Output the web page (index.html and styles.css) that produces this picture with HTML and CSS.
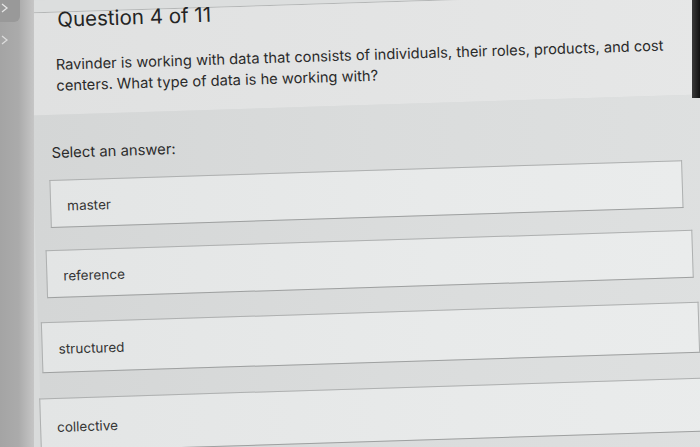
FILE: index.html
```html
<!DOCTYPE html>
<html lang="en">
<head>
<meta charset="utf-8">
<title>Question 4 of 11</title>
<link rel="stylesheet" href="styles.css">
</head>
<body>
<div class="screen">
  <aside class="rail">
    <div class="rail-tile">
      <svg width="10" height="12" viewBox="0 0 10 12"><path d="M2 2 L7 6 L2 10" fill="none" stroke="#e6e6e6" stroke-width="1.3"/></svg>
    </div>
    <div class="rail-chev">
      <svg width="10" height="12" viewBox="0 0 10 12"><path d="M2 2 L7 6 L2 10" fill="none" stroke="#dcdcdc" stroke-width="1.3"/></svg>
    </div>
  </aside>
  <main class="panel">
    <div class="topbar"></div>
    <section class="question">
      <h1 class="title">Question 4 of 11</h1>
      <p class="prompt">Ravinder is working with data that consists of individuals, their roles, products, and cost centers. What type of data is he working with?</p>
    </section>
    <section class="answers">
      <p class="select">Select an answer:</p>
      <div class="options">
        <div class="option opt1">master</div>
        <div class="option opt2">reference</div>
        <div class="option opt3">structured</div>
        <div class="option opt4">collective</div>
      </div>
    </section>
  </main>
  <div class="bezel"></div>
</div>
</body>
</html>
```

FILE: styles.css
```css
* { box-sizing: border-box; }
html, body {
  margin: 0;
  padding: 0;
  width: 700px;
  height: 447px;
  overflow: hidden;
  background: #d9dbdb;
  font-family: Inter, "Liberation Sans", Arial, sans-serif;
  color: #2e2e2e;
}
.screen {
  position: relative;
  display: flex;
  width: 700px;
  height: 447px;
  overflow: hidden;
}
.rail {
  position: relative;
  z-index: 2;
  width: 34px;
  flex: none;
  background: linear-gradient(90deg, #a4a4a4 0%, #ababab 55%, #c6c6c6 100%);
  display: flex;
  flex-direction: column;
  align-items: flex-start;
}
.rail-tile {
  width: 20px;
  height: 22px;
  background: #999999;
  border-radius: 0 0 6px 0;
  display: flex;
  align-items: flex-start;
  padding-top: 2px;
}
.rail-chev {
  margin-top: 12px;
  display: flex;
}
.panel {
  flex: none;
  width: 700px;
  height: 500px;
  margin-left: -12px;
  padding-left: 12px;
  display: flex;
  flex-direction: column;
  transform: rotate(-1.8deg);
  transform-origin: 28px 200px;
  background: #d9dbdb;
}
.topbar {
  height: 13px;
  flex: none;
  background: #dcdede;
  border-bottom: 1px solid #b4b6b6;
}
.question {
  flex: none;
  height: 102px;
  background: linear-gradient(90deg, #e0e1e1 0%, #e6e7e7 100%);
  padding: 0 30px 0 29px;
}
.title {
  margin: -3px 0 0 0;
  font-weight: 400;
  font-size: 20.5px;
  line-height: 20px;
  color: #242424;
}
.prompt {
  margin: 25px 0 0 -3px;
  font-size: 14.7px;
  line-height: 21px;
  color: #2a2a2a;
}
.answers {
  flex: 1;
  background: linear-gradient(90deg, #d4d6d6 0%, #dadcdc 50%, #dee0e0 100%);
}
.select {
  margin: 28px 0 0 19px;
  font-size: 14.8px;
  line-height: 20px;
  color: #2a2a2a;
}
.options {
  margin-top: 17px;
  display: flex;
  flex-direction: column;
}
.option {
  background: linear-gradient(90deg, #e3e5e5 0%, #e8eaea 60%, #eaecec 100%);
  border: 1px solid #aeb0b0;
  border-bottom-color: #9ea0a0;
  display: flex;
  align-items: center;
  padding-left: 16px;
  padding-top: 3px;
  font-size: 13.5px;
  color: #333;
}
.opt1 { height: 48px; margin: 0 39px 0 16px; }
.opt2 { height: 48px; margin: 22px 31px 0 10px; }
.opt3 { height: 51px; margin: 24px 27px 0 3px; }
.opt4 { height: 54px; margin: 25px -20px 0 -1px; }
.bezel {
  position: absolute;
  top: 0;
  right: 0;
  width: 8px;
  height: 98px;
  background: linear-gradient(90deg, #3a3a3a, #111);
  z-index: 3;
}
```
